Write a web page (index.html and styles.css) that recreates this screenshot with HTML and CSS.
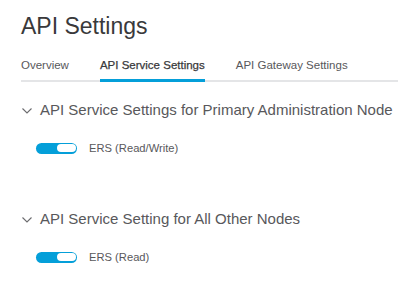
FILE: index.html
```html
<!DOCTYPE html>
<html>
<head>
<meta charset="utf-8">
<link rel="stylesheet" href="styles.css">
</head>
<body>
<div class="page">
  <h1 class="title">API Settings</h1>
  <nav class="tabs">
    <span class="tab">Overview</span>
    <span class="tab active">API Service Settings</span>
    <span class="tab">API Gateway Settings</span>
  </nav>
  <section class="section">
    <div class="section-head">
      <svg class="chev" width="10" height="6" viewBox="0 0 10 6"><polyline points="0.5,0.5 5,5 9.5,0.5" fill="none" stroke="#6b6b6e" stroke-width="1.1"/></svg>
      <span>API Service Settings for Primary Administration Node</span>
    </div>
    <div class="row">
      <span class="toggle"><span class="knob"></span></span>
      <span class="label">ERS (Read/Write)</span>
    </div>
  </section>
  <section class="section second">
    <div class="section-head">
      <svg class="chev" width="10" height="6" viewBox="0 0 10 6"><polyline points="0.5,0.5 5,5 9.5,0.5" fill="none" stroke="#6b6b6e" stroke-width="1.1"/></svg>
      <span>API Service Setting for All Other Nodes</span>
    </div>
    <div class="row">
      <span class="toggle"><span class="knob"></span></span>
      <span class="label">ERS (Read)</span>
    </div>
  </section>
</div>
</body>
</html>
```
FILE: styles.css
```css
html, body {
  margin: 0;
  padding: 0;
  background: #ffffff;
}
body {
  font-family: "Liberation Sans", Arial, sans-serif;
  color: #58585b;
}
.page {
  padding: 12px 2px 0 21px;
}
.title {
  margin: 0;
  font-size: 23px;
  line-height: 28px;
  font-weight: normal;
  color: #39393b;
}
.tabs {
  display: flex;
  gap: 31px;
  margin-top: 18px;
  border-bottom: 2px solid #e4e5e7;
}
.tab {
  font-size: 11.5px;
  line-height: 14px;
  padding-bottom: 7px;
  border-bottom: 3px solid transparent;
  margin-bottom: -2px;
  color: #58585b;
}
.tab.active {
  color: #39393b;
  border-bottom-color: #049fd9;
  -webkit-text-stroke: 0.25px #39393b;
}
.section {
  margin-top: 18px;
}
.section.second {
  margin-top: 54px;
}
.section-head {
  display: flex;
  align-items: center;
  gap: 8px;
  font-size: 15px;
  line-height: 20px;
  color: #58585b;
  padding-left: 1px;
}
.chev {
  display: block;
  margin-top: 1px;
}
.row {
  display: flex;
  align-items: center;
  gap: 12px;
  margin-top: 21px;
  padding-left: 15px;
}
.toggle {
  display: flex;
  justify-content: flex-end;
  box-sizing: border-box;
  width: 41px;
  height: 11px;
  padding: 1.5px;
  background: #049fd9;
  border-radius: 6px;
}
.knob {
  width: 19px;
  height: 100%;
  background: #ffffff;
  border-radius: 4px;
}
.label {
  font-size: 11.2px;
  line-height: 14px;
  color: #58585b;
}
```
